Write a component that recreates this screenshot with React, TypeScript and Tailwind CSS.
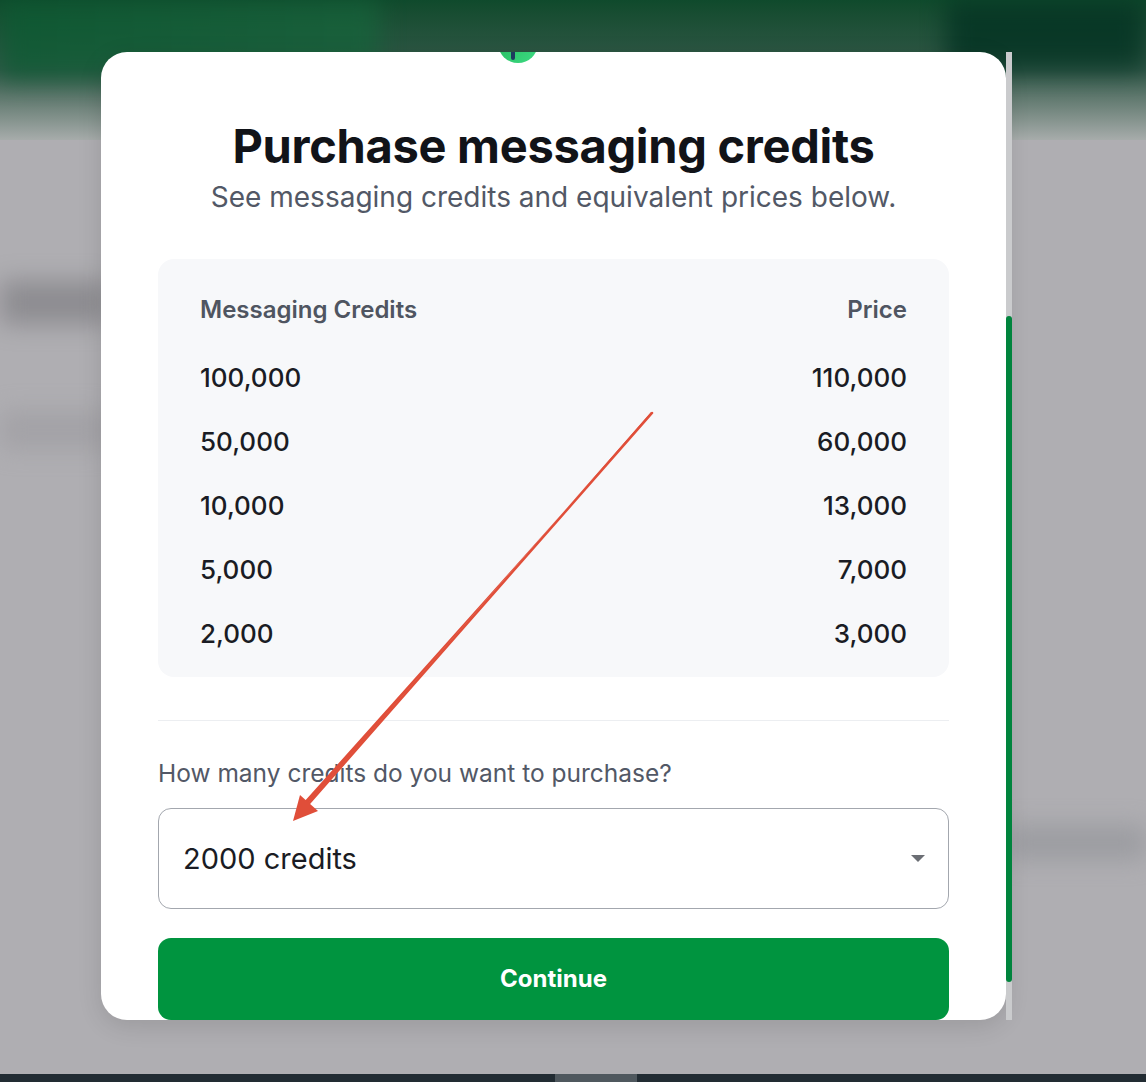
import React from "react";

const rows = [
  ["100,000", "110,000"],
  ["50,000", "60,000"],
  ["10,000", "13,000"],
  ["5,000", "7,000"],
  ["2,000", "3,000"],
];

export default function App() {
  return (
    <div
      className="relative w-[1146px] h-[1082px] overflow-hidden bg-[#afaeb2]"
      style={{ fontFamily: "Inter, 'Noto Sans', sans-serif" }}
    >
      {/* blurred backdrop */}
      <div className="absolute inset-x-0 top-0 h-[140px] bg-gradient-to-b from-[#0f4a2c] via-[#33594a] to-[#a7acab]" />
      <div className="absolute left-0 top-0 w-[380px] h-[80px] bg-gradient-to-r from-[#0a5c32] to-[#16663c] opacity-70 blur-md" />
      <div className="absolute right-0 top-0 w-[200px] h-[70px] bg-[#033222] opacity-80 blur-md" />
      <div className="absolute left-0 top-[280px] w-[110px] h-[45px] bg-[#78777c] opacity-60 blur-md" />
      <div className="absolute left-0 top-[410px] w-[110px] h-[40px] bg-[#98979c] opacity-50 blur-md" />
      <div className="absolute right-0 top-[825px] w-[140px] h-[35px] bg-[#8f9196] opacity-60 blur-md" />
      <div className="absolute inset-x-0 bottom-0 h-[8px] bg-[#222c33]" />
      <div className="absolute left-[555px] bottom-0 w-[82px] h-[8px] bg-[#4f585e]" />

      {/* modal */}
      <div className="absolute left-[101px] top-[52px] flex">
        <div className="w-[905px] h-[968px] bg-white rounded-[26px] overflow-hidden shadow-[0_6px_24px_rgba(0,0,0,0.12)] flex flex-col px-[57px]">
          <div className="flex justify-center -mt-[29px] pr-[72px]">
            <div className="w-[40px] h-[40px] rounded-full bg-gradient-to-br from-[#1fb254] to-[#3ddc84] flex items-end justify-center">
              <div className="w-[4px] h-[10px] bg-[#1e3a5f] rounded-sm mb-[3px] -ml-[10px]" />
            </div>
          </div>
          <h1 className="mt-[57px] text-center text-[47px] leading-[52px] font-bold text-[#111318] tracking-[-0.3px]">
            Purchase messaging credits
          </h1>
          <p className="mt-[8px] text-center text-[28px] leading-[34px] text-[#525866]">
            See messaging credits and equivalent prices below.
          </p>
          <div className="mt-[45px] bg-[#f7f8fa] rounded-[16px] px-[42px] pt-[36px] pb-[12px]">
            <div className="flex justify-between text-[24px] leading-[30px] font-semibold text-[#4f5561] mb-[20px]">
              <span>Messaging Credits</span>
              <span>Price</span>
            </div>
            {rows.map(([a, b]) => (
              <div key={a} className="flex justify-between items-center h-[64px] text-[26px] font-medium text-[#1a1c24]">
                <span>{a}</span>
                <span>{b}</span>
              </div>
            ))}
          </div>
          <div className="mt-[43px] h-px bg-[#eceef1]" />
          <p className="mt-[37px] text-[24.5px] leading-[30px] text-[#525866]">
            How many credits do you want to purchase?
          </p>
          <div className="mt-[20px] h-[101px] shrink-0 border-[1.5px] border-[#a3a7ae] rounded-[13px] flex items-center justify-between pl-[24px] pr-[22px]">
            <span className="text-[29px] text-[#1a1c24]">2000 credits</span>
            <svg width="16" height="9" viewBox="0 0 16 9">
              <path d="M1 1h14L8 8z" fill="#6b6e74" />
            </svg>
          </div>
          <button className="mt-[29px] h-[82px] shrink-0 bg-[#00943f] rounded-[13px] text-white text-[24px] font-bold">
            Continue
          </button>
        </div>
        <div className="w-[6px] h-[968px] bg-[#cacbcd] flex flex-col">
          <div className="mt-[264px] h-[666px] bg-[#00843d] rounded-sm" />
        </div>
      </div>

      {/* red annotation arrow */}
      <svg className="absolute left-0 top-0" width="1146" height="1082">
        <path d="M652 413 L651 412 L306 806 L303 803 Z" fill="#e04e39" />
        <line x1="652" y1="413" x2="305" y2="808" stroke="#e04e39" strokeWidth="2.5" strokeLinecap="round" />
        <path d="M293 821 L300 795 L318 811 Z" fill="#e04e39" />
      </svg>
    </div>
  );
}
